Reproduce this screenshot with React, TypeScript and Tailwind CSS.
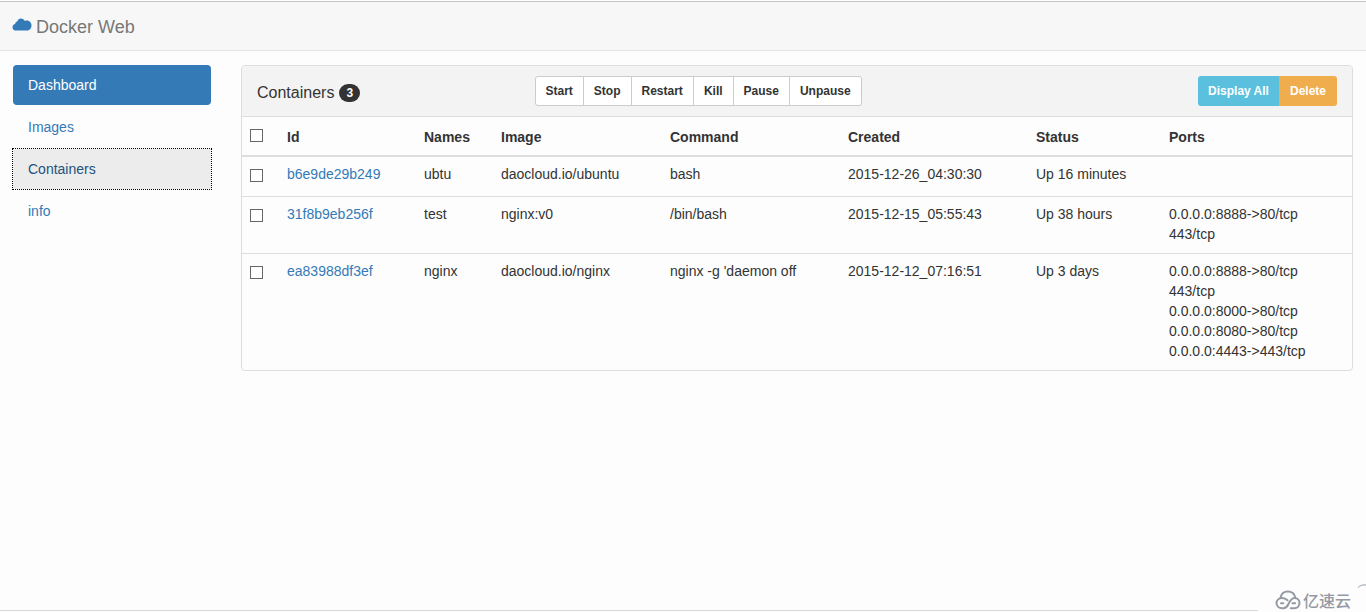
import { useState } from 'react';

type Container = {
  id: string;
  name: string;
  image: string;
  command: string;
  created: string;
  status: string;
  ports: string[];
};

const containers: Container[] = [
  {
    id: 'b6e9de29b249',
    name: 'ubtu',
    image: 'daocloud.io/ubuntu',
    command: 'bash',
    created: '2015-12-26_04:30:30',
    status: 'Up 16 minutes',
    ports: [],
  },
  {
    id: '31f8b9eb256f',
    name: 'test',
    image: 'nginx:v0',
    command: '/bin/bash',
    created: '2015-12-15_05:55:43',
    status: 'Up 38 hours',
    ports: ['0.0.0.0:8888->80/tcp', '443/tcp'],
  },
  {
    id: 'ea83988df3ef',
    name: 'nginx',
    image: 'daocloud.io/nginx',
    command: "nginx -g 'daemon off",
    created: '2015-12-12_07:16:51',
    status: 'Up 3 days',
    ports: [
      '0.0.0.0:8888->80/tcp',
      '443/tcp',
      '0.0.0.0:8000->80/tcp',
      '0.0.0.0:8080->80/tcp',
      '0.0.0.0:4443->443/tcp',
    ],
  },
];

const actions = ['Start', 'Stop', 'Restart', 'Kill', 'Pause', 'Unpause'];

const columns = [
  { title: 'Id', width: 'w-[137px]' },
  { title: 'Names', width: 'w-[77px]' },
  { title: 'Image', width: 'w-[169px]' },
  { title: 'Command', width: 'w-[178px]' },
  { title: 'Created', width: 'w-[188px]' },
  { title: 'Status', width: 'w-[133px]' },
  { title: 'Ports', width: 'w-[191px]' },
];

function Checkbox({ label, checked, onChange }: { label: string; checked: boolean; onChange: () => void }) {
  return (
    <input
      type="checkbox"
      aria-label={label}
      checked={checked}
      onChange={onChange}
      className="block size-[13px] appearance-none border border-[#666] bg-white checked:bg-[#337ab7]"
    />
  );
}

function Header() {
  return (
    <header className="mt-px border-t border-b border-t-[#c4c4c4] border-b-[#e2e2e2] bg-[#f7f7f7]">
      <a href="#" className="flex h-12 w-fit items-center gap-1 px-3 pt-[2px] text-lg text-[#777]">
        <svg viewBox="0 0 20 13" className="mb-[6px] h-[13px] w-5 text-[#337ab7]" fill="currentColor" aria-hidden="true">
          <path d="M4.200 12.600C2 12.600.5 11.300.5 9.400c0-1.800 1.200-3.100 2.700-3.300C3.200 4.600 4.100 3.600 5.300 3.600 5.900 1.600 7.100.6 8.900.6c1.900 0 3.200.9 3.900 2.400.6-.3 1.200-.4 1.900-.4 2.700 0 4.800 2.200 4.800 4.900 0 2.900-2.100 5.100-4.900 5.100z" />
        </svg>
        Docker Web
      </a>
    </header>
  );
}

function Sidebar() {
  const base = 'block rounded px-[15px] py-[10px]';
  return (
    <nav className="flex w-[198px] shrink-0 flex-col gap-[2px]">
      <a href="#dashboard" className={`${base} bg-[#337ab7] text-white`}>Dashboard</a>
      <a href="#images" className={`${base} text-[#337ab7]`}>Images</a>
      <a href="#containers" className="block bg-[#ececec] px-[15px] py-[10px] text-[#23527c] outline-1 outline-dotted outline-black">
        Containers
      </a>
      <a href="#info" className={`${base} text-[#337ab7]`}>info</a>
    </nav>
  );
}

function PanelHeading() {
  return (
    <div className="flex items-center rounded-t border-b border-[#ddd] bg-[#f3f3f3] py-[10px] text-xs font-bold">
      <h1 className="flex w-1/4 items-center gap-[5px] px-[15px] pt-[3px] text-base font-normal">
        Containers
        <span className="mt-px rounded-full bg-[#333] px-[7px] py-[3px] text-xs leading-3 font-bold text-white">3</span>
      </h1>
      <div className="flex w-1/2 px-[15px]">
        {actions.map((action) => (
          <button
            key={action}
            type="button"
            className="-ml-px h-[30px] border border-[#ccc] bg-white px-[10px] first:ml-0 first:rounded-l-[3px] last:rounded-r-[3px]"
          >
            {action}
          </button>
        ))}
      </div>
      <div className="flex w-1/4 justify-end px-[15px] text-white">
        <button type="button" className="h-[30px] rounded-l-[3px] bg-[#5bc0de] px-[10px]">Display All</button>
        <button type="button" className="h-[30px] rounded-r-[3px] bg-[#f0ad4e] px-[11px]">Delete</button>
      </div>
    </div>
  );
}

function ContainerTable() {
  const [selected, setSelected] = useState<string[]>([]);
  const allSelected = selected.length === containers.length;
  const toggle = (id: string) =>
    setSelected((ids) => (ids.includes(id) ? ids.filter((other) => other !== id) : [...ids, id]));

  return (
    <table className="w-full table-fixed border-separate border-spacing-0 text-left">
      <thead>
        <tr>
          <th className="w-[37px] border-b-2 border-[#ddd] px-2 pt-3 pb-3 align-top">
            <Checkbox
              label="Select all"
              checked={allSelected}
              onChange={() => setSelected(allSelected ? [] : containers.map((c) => c.id))}
            />
          </th>
          {columns.map(({ title, width }) => (
            <th key={title} className={`${width} border-b-2 border-[#ddd] px-2 pt-[10px] pb-2`}>{title}</th>
          ))}
        </tr>
      </thead>
      <tbody className="[&_td]:border-b [&_td]:border-[#ddd] [&_td]:px-2 [&_td]:pt-[7px] [&_td]:pb-[9px] [&_td]:align-top [&_tr:last-child_td]:border-b-0">
        {containers.map((c) => (
          <tr key={c.id} className="h-10">
            <td>
              <div className="pt-[5px]">
                <Checkbox label={`Select ${c.name}`} checked={selected.includes(c.id)} onChange={() => toggle(c.id)} />
              </div>
            </td>
            <td><a href={`#${c.id}`} className="text-[#337ab7]">{c.id}</a></td>
            <td>{c.name}</td>
            <td>{c.image}</td>
            <td>{c.command}</td>
            <td>{c.created}</td>
            <td>{c.status}</td>
            <td>
              {c.ports.map((port) => (
                <div key={port}>{port}</div>
              ))}
            </td>
          </tr>
        ))}
      </tbody>
    </table>
  );
}

function Footer() {
  return (
    <footer className="mt-auto flex items-end">
      <div className="mb-px grow border-t border-[#d8d8d8]" />
      <div className="flex w-[108px] items-end gap-[2px] pb-[2px] pl-[17px] text-[#9499a3]">
        <svg viewBox="0 0 26 20" className="h-5 w-[26px] shrink-0" fill="none" stroke="currentColor" strokeWidth="2" strokeLinecap="round" aria-hidden="true">
          <path d="M5.500 7.500C6.300 3.800 9.200 1.500 12.800 1.500c3.700 0 6.700 2.300 7.500 6" />
          <path d="M12.500 10.300C11 8.700 9.300 7.900 7.200 7.900c-3.300 0-5.700 2.200-5.700 5.200s2.400 5.200 5.700 5.200h1.300c2.300 0 3.600-1.600 4.700-3.800 1.600-3.300 3-6.600 6.300-6.600 3 0 5 2.200 5 5.200s-2.300 5.200-5.300 5.200h-3.400" />
          <path d="M6 13.300h2.300M17.500 13.300h2.600" />
        </svg>
        <span className="font-['Noto_Sans_CJK_SC',sans-serif] text-base leading-5 font-medium">亿速云</span>
        <svg viewBox="0 0 8 4" className="mb-[22px] ml-auto h-1 w-2 shrink-0" fill="none" stroke="currentColor" aria-hidden="true">
          <path d="M0 3.500C2 1.500 4.500.5 8 1" />
        </svg>
      </div>
    </footer>
  );
}

export default function App() {
  return (
    <div className="flex min-h-screen flex-col bg-[#fdfdfd] font-['Liberation_Sans',Arial,sans-serif] text-sm leading-5 text-[#333]">
      <Header />
      <div className="flex items-start gap-[30px] px-[13px] pt-[14px]">
        <Sidebar />
        <main className="min-w-0 grow rounded border border-[#ddd]">
          <PanelHeading />
          <ContainerTable />
        </main>
      </div>
      <Footer />
    </div>
  );
}
